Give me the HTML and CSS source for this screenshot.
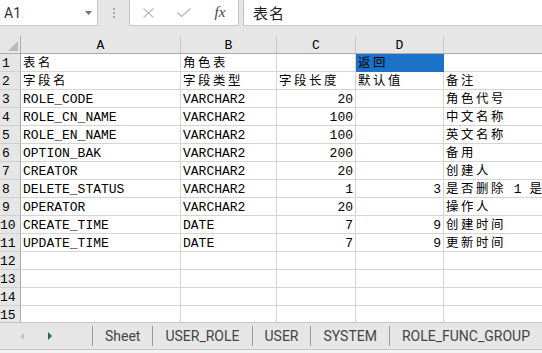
FILE: index.html
```html
<!DOCTYPE html>
<html lang="zh-CN">
<head>
  <meta charset="UTF-8">
  <title>ROLE 表结构</title>
  <link rel="stylesheet" href="styles.css">
</head>
<body>
  <div class="app">
    <!-- formula bar -->
    <div class="formula-bar">
      <div class="name-box">
        <span class="cell-ref">A1</span>
        <svg class="caret" width="7" height="4" viewBox="0 0 7 4"><path d="M0 0h7L3.5 4z" fill="#707070"/></svg>
      </div>
      <div class="grip"><i></i><i></i><i></i></div>
      <div class="fx-buttons">
        <span class="fx-slot"><svg width="11" height="10" viewBox="0 0 11 10"><path d="M0.5 0.5l10 9M10.5 0.5l-10 9" stroke="#bcbcbc" stroke-width="1.2" fill="none"/></svg></span>
        <span class="fx-slot"><svg width="14" height="9" viewBox="0 0 14 9"><path d="M0.5 4.5l4 4 9-8" stroke="#bcbcbc" stroke-width="1.4" fill="none"/></svg></span>
        <span class="fx-slot fx">fx</span>
      </div>
      <div class="formula-input"><span class="zh">表名</span></div>
    </div>

    <!-- grid -->
    <div class="sheet">
      <div class="grid">
        <div class="corner"><span class="corner-tri"></span></div>
        <div class="col-head">A</div>
        <div class="col-head">B</div>
        <div class="col-head">C</div>
        <div class="col-head">D</div>
        <div class="col-head"></div>

        <div class="row-head">1</div>
        <div class="c"><span class="zh">表名</span></div>
        <div class="c"><span class="zh">角色表</span></div>
        <div class="c"></div>
        <div class="c selected"><span class="zh">返回</span></div>
        <div class="c"></div>

        <div class="row-head">2</div>
        <div class="c"><span class="zh">字段名</span></div>
        <div class="c"><span class="zh">字段类型</span></div>
        <div class="c"><span class="zh">字段长度</span></div>
        <div class="c"><span class="zh">默认值</span></div>
        <div class="c"><span class="zh">备注</span></div>

        <div class="row-head">3</div>
        <div class="c">ROLE_CODE</div>
        <div class="c">VARCHAR2</div>
        <div class="c num">20</div>
        <div class="c num"></div>
        <div class="c"><span class="zh">角色代号</span></div>

        <div class="row-head">4</div>
        <div class="c">ROLE_CN_NAME</div>
        <div class="c">VARCHAR2</div>
        <div class="c num">100</div>
        <div class="c num"></div>
        <div class="c"><span class="zh">中文名称</span></div>

        <div class="row-head">5</div>
        <div class="c">ROLE_EN_NAME</div>
        <div class="c">VARCHAR2</div>
        <div class="c num">100</div>
        <div class="c num"></div>
        <div class="c"><span class="zh">英文名称</span></div>

        <div class="row-head">6</div>
        <div class="c">OPTION_BAK</div>
        <div class="c">VARCHAR2</div>
        <div class="c num">200</div>
        <div class="c num"></div>
        <div class="c"><span class="zh">备用</span></div>

        <div class="row-head">7</div>
        <div class="c">CREATOR</div>
        <div class="c">VARCHAR2</div>
        <div class="c num">20</div>
        <div class="c num"></div>
        <div class="c"><span class="zh">创建人</span></div>

        <div class="row-head">8</div>
        <div class="c">DELETE_STATUS</div>
        <div class="c">VARCHAR2</div>
        <div class="c num">1</div>
        <div class="c num">3</div>
        <div class="c"><span class="zh">是否删除</span> 1 <span class="zh">是</span></div>

        <div class="row-head">9</div>
        <div class="c">OPERATOR</div>
        <div class="c">VARCHAR2</div>
        <div class="c num">20</div>
        <div class="c num"></div>
        <div class="c"><span class="zh">操作人</span></div>

        <div class="row-head">10</div>
        <div class="c">CREATE_TIME</div>
        <div class="c">DATE</div>
        <div class="c num">7</div>
        <div class="c num">9</div>
        <div class="c"><span class="zh">创建时间</span></div>

        <div class="row-head">11</div>
        <div class="c">UPDATE_TIME</div>
        <div class="c">DATE</div>
        <div class="c num">7</div>
        <div class="c num">9</div>
        <div class="c"><span class="zh">更新时间</span></div>

        <div class="row-head">12</div>
        <div class="c"></div><div class="c"></div><div class="c"></div><div class="c"></div><div class="c"></div>
        <div class="row-head">13</div>
        <div class="c"></div><div class="c"></div><div class="c"></div><div class="c"></div><div class="c"></div>
        <div class="row-head">14</div>
        <div class="c"></div><div class="c"></div><div class="c"></div><div class="c"></div><div class="c"></div>
        <div class="row-head">15</div>
        <div class="c"></div><div class="c"></div><div class="c"></div><div class="c"></div><div class="c"></div>
      </div>
    </div>

    <!-- sheet tabs -->
    <div class="tab-bar">
      <div class="tab-nav">
        <svg width="4" height="7" viewBox="0 0 4 7"><path d="M4 0v7L0 3.5z" fill="#c4c4c4"/></svg>
        <svg width="4" height="8" viewBox="0 0 4 8"><path d="M0 0v8l4-4z" fill="#1f6b3e"/></svg>
      </div>
      <div class="tab">Sheet</div>
      <div class="tab">USER_ROLE</div>
      <div class="tab">USER</div>
      <div class="tab">SYSTEM</div>
      <div class="tab">ROLE_FUNC_GROUP</div>
    </div>
    <div class="status-bar"></div>
  </div>
</body>
</html>
```

FILE: styles.css
```css
body {
  margin: 0;
  background: #fff;
}
.app {
  width: 542px;
  height: 353px;
  overflow: hidden;
  background: #e6e6e6;
  font-family: "Liberation Mono", "Noto Sans CJK SC", monospace;
  font-size: 13px;
  color: #000;
}
.zh {
  display: inline-block;
  height: 11px;
  font-family: "Noto Sans CJK SC", sans-serif;
  font-size: 12.4px;
  letter-spacing: 2.6px;
  line-height: 11px;
}

/* formula bar */
.formula-bar {
  height: 36px;
  display: flex;
  align-items: flex-start;
}
.name-box {
  width: 88px;
  height: 25px;
  background: #fff;
  border-right: 1px solid #c6c6c6;
  border-bottom: 1px solid #c6c6c6;
  display: flex;
  align-items: center;
  justify-content: space-between;
  padding: 0 5px 0 4px;
}
.cell-ref {
  font-family: Roboto, "Liberation Sans", sans-serif;
  font-size: 14px;
  color: #333;
}
.grip {
  width: 31px;
  height: 26px;
  display: flex;
  flex-direction: column;
  align-items: center;
  justify-content: center;
  gap: 2px;
}
.grip i {
  width: 2px;
  height: 2px;
  background: #a8a8a8;
}
.fx-buttons {
  width: 108px;
  height: 25px;
  background: #fff;
  border: 1px solid #c6c6c6;
  border-top: 0;
  display: flex;
}
.fx-slot {
  width: 36px;
  display: flex;
  align-items: center;
  justify-content: center;
}
.fx {
  font-family: "Liberation Serif", serif;
  font-style: italic;
  font-size: 15px;
  color: #444;
}
.formula-input {
  flex: 1;
  height: 25px;
  margin-left: 4px;
  background: #fff;
  border-left: 1px solid #c6c6c6;
  border-bottom: 1px solid #c6c6c6;
  padding-left: 9px;
  display: flex;
  align-items: center;
}
.formula-input .zh {
  height: 20px;
  font-size: 15px;
  letter-spacing: 1px;
  line-height: 20px;
  color: #222;
}

/* grid */
.sheet {
  height: 286px;
  overflow: hidden;
}
.grid {
  display: grid;
  grid-template-columns: 21px 160px 96px 79px 88px 140px;
  grid-auto-rows: 18px;
  width: 584px;
  background: #fff;
}
.grid > div {
  box-sizing: border-box;
  white-space: nowrap;
}
.c {
  border-right: 1px solid #d4d4d4;
  border-bottom: 1px solid #d4d4d4;
  padding: 2px 2px 0;
  line-height: 16px;
}
.c.num {
  text-align: right;
}
.c.selected {
  background: #1c72c9;
  border-color: #1c72c9;
}
.corner {
  background: #e6e6e6;
  border-right: 1px solid #ababab;
  border-bottom: 1px solid #ababab;
  display: flex;
  justify-content: flex-end;
  align-items: flex-end;
  padding: 0 2px 2px 0;
}
.corner-tri {
  width: 0;
  height: 0;
  border-left: 10px solid transparent;
  border-bottom: 10px solid #b9b9b9;
}
.col-head {
  background: #e6e6e6;
  border-right: 1px solid #c8c8c8;
  border-bottom: 1px solid #ababab;
  text-align: center;
  padding-top: 2px;
  line-height: 16px;
}
.row-head {
  background: #e6e6e6;
  border-right: 1px solid #ababab;
  border-bottom: 1px solid #d0d0d0;
  text-align: center;
  padding: 2px 8px 0 0;
  line-height: 16px;
}

/* sheet tabs */
.tab-bar {
  height: 26px;
  border-top: 1px solid #c6c6c6;
  display: flex;
  align-items: center;
  font-family: Roboto, "Liberation Sans", sans-serif;
  font-size: 14px;
  color: #444;
}
.tab-nav {
  width: 92px;
  display: flex;
  align-items: center;
  gap: 24px;
  padding-left: 20px;
  box-sizing: border-box;
}
.tab {
  border-left: 1px solid #9b9b9b;
  padding: 0 12px;
  line-height: 20px;
}
.status-bar {
  height: 4px;
  border-top: 1px solid #c6c6c6;
  background: #f2f2f2;
}
```
